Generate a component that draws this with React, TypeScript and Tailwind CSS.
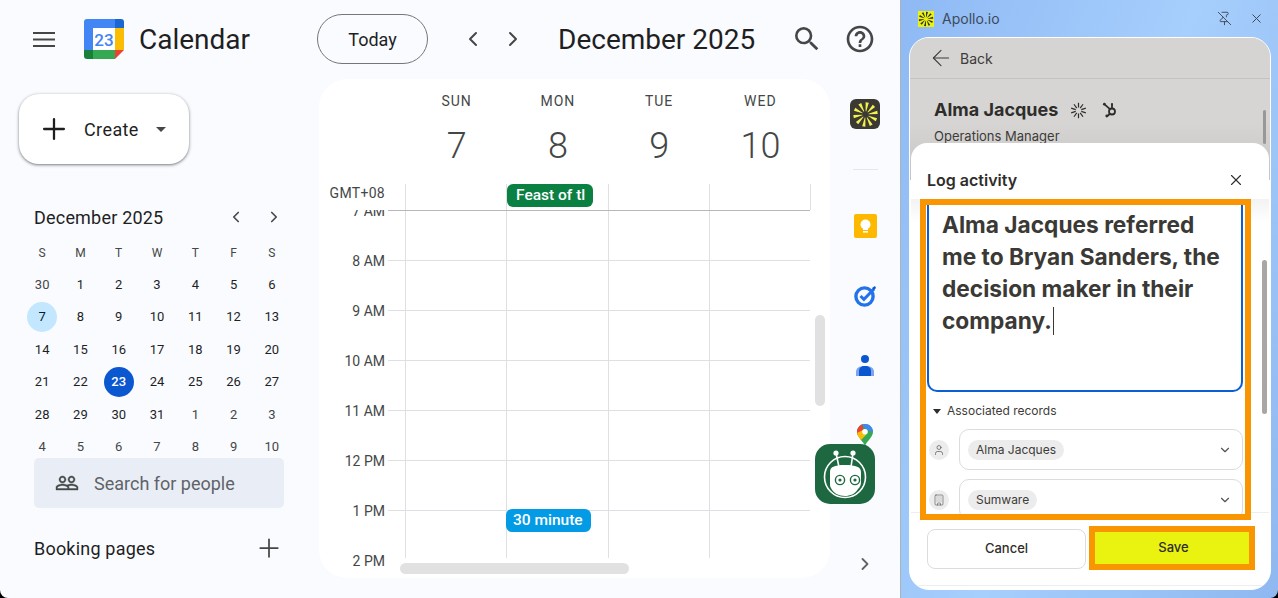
import {
  ArrowLeft,
  Building,
  ChevronDown,
  ChevronLeft,
  ChevronRight,
  PinOff,
  Plus,
  User,
  X,
} from "lucide-react";

const miniDays = [
  [30, 1, 2, 3, 4, 5, 6],
  [7, 8, 9, 10, 11, 12, 13],
  [14, 15, 16, 17, 18, 19, 20],
  [21, 22, 23, 24, 25, 26, 27],
  [28, 29, 30, 31, 1, 2, 3],
  [4, 5, 6, 7, 8, 9, 10],
];

const weekHead = ["S", "M", "T", "W", "T", "F", "S"];
const columns = [
  { day: "SUN", date: 7 },
  { day: "MON", date: 8 },
  { day: "TUE", date: 9 },
  { day: "WED", date: 10 },
];
const hours = ["7 AM", "8 AM", "9 AM", "10 AM", "11 AM", "12 PM", "1 PM"];

const Burst = ({ size, color }: { size: number; color: string }) => (
  <svg width={size} height={size} viewBox="0 0 30 30">
    {[0, 36, 72, 108, 144, 180, 216, 252, 288, 324].map((deg) => (
      <polygon
        key={deg}
        points="14.7,11.5 15.3,11.5 16.8,1.5 13.2,1.5"
        fill={color}
        transform={`rotate(${deg + 8} 15 15)`}
      />
    ))}
  </svg>
);

const Spark = () => (
  <svg width="17" height="17" viewBox="0 0 17 17" stroke="#2f2d2b" strokeWidth="1.2">
    {[0, 36, 72, 108, 144, 180, 216, 252, 288, 324].map((deg) => (
      <line key={deg} x1="8.5" y1="5.6" x2="8.5" y2="0.8" transform={`rotate(${deg} 8.5 8.5)`} />
    ))}
  </svg>
);

const HamburgerIcon = () => (
  <svg width="22" height="15" viewBox="0 0 22 15" stroke="#444746" strokeWidth="2">
    <line x1="0" y1="1" x2="22" y2="1" />
    <line x1="0" y1="7.5" x2="22" y2="7.5" />
    <line x1="0" y1="14" x2="22" y2="14" />
  </svg>
);

const SearchIcon = () => (
  <svg width="32" height="32" viewBox="0 0 24 24" fill="#444746">
    <path d="M15.5 14h-.79l-.28-.27A6.471 6.471 0 0 0 16 9.5 6.5 6.5 0 1 0 9.5 16c1.61 0 3.09-.59 4.23-1.57l.27.28v.79l5 4.99L20.49 19l-4.99-5zm-6 0C7.01 14 5 11.99 5 9.5S7.01 5 9.5 5 14 7.01 14 9.5 11.99 14 9.5 14z" />
  </svg>
);

const HelpIcon = () => (
  <svg width="32" height="32" viewBox="0 0 24 24" fill="#444746">
    <path d="M11 18h2v-2h-2v2zm1-16C6.48 2 2 6.48 2 12s4.48 10 10 10 10-4.48 10-10S17.52 2 12 2zm0 18c-4.41 0-8-3.59-8-8s3.59-8 8-8 8 3.59 8 8-3.59 8-8 8zm0-14c-2.21 0-4 1.79-4 4h2c0-1.1.9-2 2-2s2 .9 2 2c0 2-3 1.75-3 5h2c0-2.25 3-2.5 3-5 0-2.21-1.79-4-4-4z" />
  </svg>
);

const CalendarLogo = () => (
  <svg width="40" height="40" viewBox="0 0 40 40">
    <path d="M3 0h28v9H9v22H0V3a3 3 0 0 1 3-3z" fill="#4285f4" />
    <path d="M31 0h6a3 3 0 0 1 3 3v6h-9z" fill="#1967d2" />
    <rect x="31" y="9" width="9" height="22" fill="#fbbc04" />
    <path d="M9 31h22v9H9z" fill="#34a853" />
    <path d="M0 31h9v9H3a3 3 0 0 1-3-3z" fill="#188038" />
    <path d="M31 31h9l-9 9z" fill="#ea4335" />
    <rect x="9" y="9" width="22" height="22" fill="#fff" />
    <text
      x="20"
      y="26.5"
      textAnchor="middle"
      fontSize="17"
      fontWeight="500"
      fontFamily="Roboto, sans-serif"
      fill="#4285f4"
    >
      23
    </text>
  </svg>
);

const BotBadge = () => (
  <svg width="60" height="60" viewBox="0 0 60 60">
    <rect width="60" height="60" rx="15" fill="#1e6841" />
    <circle cx="30" cy="33" r="20.5" fill="none" stroke="#fff" strokeWidth="1.6" />
    <path d="M21 9l3 14M38 9l-2 14" stroke="#fff" strokeWidth="1.6" />
    <circle cx="21" cy="9" r="2.6" fill="#fff" />
    <circle cx="38" cy="9" r="2.6" fill="#fff" />
    <path
      d="M15 28c0-5 4-7 15-7s16 2 16 7v10c0 3-1 5-3 7-3 5-8 7-13 7-6 0-12-3-14-8-1-1-1-3-1-5z"
      fill="#fff"
    />
    <circle cx="25" cy="36" r="4.6" fill="#fff" stroke="#1e6841" strokeWidth="1.4" />
    <circle cx="40" cy="36" r="4.6" fill="#fff" stroke="#1e6841" strokeWidth="1.4" />
    <circle cx="25" cy="36" r="1.6" fill="#1e6841" />
    <circle cx="40" cy="36" r="1.6" fill="#1e6841" />
  </svg>
);

const KeepIcon = () => (
  <svg width="23" height="24" viewBox="0 0 23 24">
    <rect width="23" height="24" rx="2" fill="#fdb900" />
    <circle cx="11.5" cy="10.5" r="5" fill="#fff" />
    <rect x="9" y="13" width="5" height="3" fill="#fff" />
    <rect x="9" y="17" width="5" height="1.6" fill="#fff" />
  </svg>
);

const TasksIcon = () => (
  <svg width="23" height="22" viewBox="0 0 23 22">
    <circle cx="10.5" cy="11.5" r="8.6" fill="none" stroke="#2273ea" strokeWidth="3.4" />
    <path d="M6.5 11l3.4 3.4L20 4" fill="none" stroke="#2273ea" strokeWidth="3" />
    <path d="M18 3l3-2 1 2-2 2z" fill="#0b57d0" />
  </svg>
);

const ContactIcon = () => (
  <svg width="18" height="21" viewBox="0 0 18 21">
    <circle cx="9" cy="4" r="4" fill="#0b57d0" />
    <path d="M0 21v-4c0-4 3-6 9-6s9 2 9 6v4z" fill="#7ba5f0" />
    <path d="M3 21v-5c0-3 2-5 6-5s6 2 6 5v5z" fill="#0b57d0" />
  </svg>
);

const MapsIcon = () => (
  <svg width="16" height="22" viewBox="0 0 16 22">
    <clipPath id="pin">
      <path d="M8 0C3.6 0 0 3.5 0 7.8c0 5.6 6 9 8 14.2 2-5.2 8-8.6 8-14.2C16 3.5 12.4 0 8 0z" />
    </clipPath>
    <g clipPath="url(#pin)">
      <rect width="16" height="22" fill="#34a853" />
      <path d="M0 0h6v6L0 12z" fill="#ea4335" />
      <path d="M4 0h12v8l-6-2z" fill="#4285f4" />
      <path d="M0 9l6-3 3 5-6 6-3-3z" fill="#fbbc04" />
    </g>
    <circle cx="8" cy="7.8" r="2.8" fill="#fff" />
  </svg>
);

const PeopleIcon = () => (
  <svg width="24" height="24" viewBox="0 0 24 24" fill="#444746" stroke="#444746" strokeWidth="0.4">
    <path d="M16.5 13c-1.2 0-3.07.34-4.5 1-1.43-.67-3.3-1-4.5-1C5.33 13 1 14.08 1 16.25V19h22v-2.75c0-2.17-4.33-3.25-6.5-3.25zm-4 4.5h-10v-1.25c0-.54 2.56-1.75 5-1.75s5 1.21 5 1.75v1.25zm9 0H14v-1.25c0-.46-.2-.86-.52-1.22.88-.3 1.96-.53 3.02-.53 2.44 0 5 1.21 5 1.75v1.25zM7.5 12c1.93 0 3.5-1.57 3.5-3.5S9.43 5 7.5 5 4 6.57 4 8.5 5.57 12 7.5 12zm0-5.5c1.1 0 2 .9 2 2s-.9 2-2 2-2-.9-2-2 .9-2 2-2zm9 5.5c1.93 0 3.5-1.57 3.5-3.5S18.43 5 16.5 5 13 6.57 13 8.5s1.57 3.5 3.5 3.5zm0-5.5c1.1 0 2 .9 2 2s-.9 2-2 2-2-.9-2-2 .9-2 2-2z" />
  </svg>
);

const HubspotIcon = () => (
  <svg width="16" height="16" viewBox="0 0 16 16" fill="none" stroke="#2f2d2b" strokeWidth="1.8">
    <circle cx="10" cy="9.5" r="3" />
    <path d="M8 7.2L2.8 2.6M8 11.8l-2.6 2.2M10 6.5V2.6" />
    <circle cx="2.4" cy="2.2" r="1.4" fill="#2f2d2b" stroke="none" />
    <circle cx="4.8" cy="14" r="1.4" fill="#2f2d2b" stroke="none" />
    <circle cx="10" cy="2.2" r="1.1" fill="#2f2d2b" stroke="none" />
  </svg>
);

const MiniCalendar = () => (
  <div className="mt-[8px] ml-[23px] grid h-[221px] w-[268px] grid-cols-7 grid-rows-[31px_repeat(6,32.5px)] text-[13px]">
    {weekHead.map((d, i) => (
      <div key={i} className="flex items-center justify-center text-[12px] text-[#444746]">
        {d}
      </div>
    ))}
    {miniDays.flat().map((d, i) => {
      const muted = i === 0 || i > 31;
      return (
        <div key={i} className="flex items-center justify-center">
          <span
            className={`flex h-[30px] w-[30px] items-center justify-center rounded-full ${
              i === 23
                ? "bg-[#0b57d0] font-medium text-white"
                : i === 7
                  ? "bg-[#c2e7ff] text-[#001d35]"
                  : muted
                    ? "text-[#444746]"
                    : "text-[#1f1f1f]"
            }`}
          >
            {d}
          </span>
        </div>
      );
    })}
  </div>
);

const Sidebar = () => (
  <aside className="w-[319px] shrink-0">
    <button className="mt-[15px] ml-[19px] flex h-[70px] w-[170px] items-center rounded-[20px] bg-white pl-[18px] text-[18px] tracking-[0.4px] text-[#1f1f1f] shadow-[0_1px_3px_1px_rgba(60,64,67,0.25),0_1px_2px_rgba(60,64,67,0.4)]">
      <Plus size={34} strokeWidth={1.6} className="mr-[13px] text-[#1f1f1f]" />
      <span className="mt-[1px]">Create</span>
      <span className="ml-[17px] h-0 w-0 border-x-[5px] border-t-[5px] border-x-transparent border-t-[#444746]" />
    </button>
    <div className="mt-[41px] flex h-[24px] items-center pl-[34px] pr-[36px] text-[18px] tracking-[0.2px] text-[#1f1f1f]">
      <span className="flex-1">December 2025</span>
      <ChevronLeft size={18} strokeWidth={2.2} className="mr-[20px] text-[#444746]" />
      <ChevronRight size={18} strokeWidth={2.2} className="text-[#444746]" />
    </div>
    <MiniCalendar />
    <div className="relative ml-[34px] flex h-[50px] w-[250px] items-center rounded-[5px] bg-[#e9eef6] pl-[21px] text-[18px] text-[#5f6368]">
      <PeopleIcon />
      <span className="ml-[15px]">Search for people</span>
    </div>
    <div className="mt-[28px] flex h-[24px] items-center pl-[34px] pr-[35px] text-[18px] tracking-[0.2px] text-[#1f1f1f]">
      <span className="flex-1">Booking pages</span>
      <Plus size={30} strokeWidth={1.4} className="text-[#444746]" />
    </div>
  </aside>
);

const TimeGrid = () => (
  <div className="h-[368px] overflow-hidden">
    {hours.map((h, i) => (
      <div key={h} className={`flex ${i === 6 ? "h-[48px]" : "h-[50px]"}`}>
        <div className="-mt-[9px] h-[20px] w-[66px] shrink-0 text-right text-[14px] leading-[20px] text-[#444746]">
          {h}
        </div>
        <div
          className={`ml-[3px] flex h-full w-[422px] border-t pl-[17px] ${
            i === 0 ? "border-[#b4b7bb]" : "border-[#dde1e6]"
          }`}
        >
          {columns.map((c) => (
            <div key={c.day} className="h-full w-[101.25px] border-l border-[#dde1e6]" />
          ))}
        </div>
      </div>
    ))}
    <div className="-mt-[7px] h-[20px] w-[66px] text-right text-[14px] leading-[20px] text-[#444746]">2 PM</div>
  </div>
);

const CalendarCard = () => (
  <section className="relative h-[499px] w-[511px] shrink-0 overflow-hidden rounded-[28px] bg-white">
    <div className="flex h-[105px] pl-[87px]">
      {columns.map((c) => (
        <div key={c.day} className="w-[101.25px] text-center text-[#444746]">
          <div className="mt-[13px] text-[14px] leading-[18px] tracking-[1px]">{c.day}</div>
          <div className="mt-[14px] text-[36px] font-light leading-[44px]">{c.date}</div>
        </div>
      ))}
    </div>
    <div className="flex h-[26px]">
      <div className="w-[66px] shrink-0 text-right text-[14px] leading-[18px] tracking-[0.3px] text-[#444746]">
        GMT+08
      </div>
      <div className="ml-[20px] flex">
        {columns.map((c) => (
          <div key={c.day} className="h-full w-[101.25px] border-l border-[#dde1e6]" />
        ))}
        <div className="h-full border-l border-[#dde1e6]" />
      </div>
    </div>
    <TimeGrid />
    <div className="absolute left-[188px] top-[105px] flex h-[23px] w-[86px] items-center overflow-hidden whitespace-nowrap rounded-[6px] bg-[#0b8043] pl-[9px] pt-[1px] text-[15.5px] font-medium text-white">
      Feast of tl
    </div>
    <div className="absolute left-[187px] top-[430px] flex h-[23px] w-[85px] items-center overflow-hidden whitespace-nowrap rounded-[6px] bg-[#039be5] pl-[7px] pt-[1px] text-[15.5px] font-medium text-white">
      30 minute
    </div>
    <div className="absolute left-[496px] top-[236px] h-[91px] w-[10px] rounded-full bg-[#e1e1e1]" />
    <div className="absolute left-[81px] top-[484px] h-[11px] w-[229px] rounded-full bg-[#e1e1e1]" />
  </section>
);

const Rail = () => (
  <aside className="flex w-[70px] flex-col items-center">
    <div className="mt-[20px] flex h-[30px] w-[30px] items-center justify-center rounded-[6px] bg-[#3a3934]">
      <Burst size={27} color="#f4f14f" />
    </div>
    <div className="mt-[40px] h-px w-[25px] bg-[#e3e6ea]" />
    <div className="mt-[44px]">
      <KeepIcon />
    </div>
    <div className="mt-[47px]">
      <TasksIcon />
    </div>
    <div className="mt-[48px]">
      <ContactIcon />
    </div>
    <div className="mt-[48px]">
      <MapsIcon />
    </div>
    <ChevronRight size={20} strokeWidth={2.2} className="mt-[108px] text-[#5f6368]" />
  </aside>
);

const RecordRow = ({ name, icon }: { name: string; icon: React.ReactNode }) => (
  <div className="flex items-center pl-[3px]">
    <span className="flex h-[20px] w-[20px] shrink-0 items-center justify-center rounded-full bg-[#ececec] text-[#55524f]">
      {icon}
    </span>
    <div className="ml-[10px] flex h-[41px] w-[284px] shrink-0 items-center rounded-[10px] border border-[#dcdcdc] pl-[8px] pr-[10px]">
      <span className="flex h-[20px] items-center rounded-full bg-[#ececec] px-[8px] text-[12px] text-[#3d3b38]">
        {name}
      </span>
      <ChevronDown size={14} className="ml-auto text-[#55524f]" />
    </div>
  </div>
);

const LogActivity = () => (
  <div className="absolute left-[1px] top-[105px] flex h-[446px] w-[358px] flex-col rounded-t-[16px] bg-[linear-gradient(#ffffff_442px,#eeeeee_442px,#eeeeee_443px,#ffffff_443px)]">
    <div className="flex h-[56px] shrink-0 items-end justify-between pb-[9px] pl-[16px] pr-[24px]">
      <span className="text-[16px] font-semibold leading-[20px] text-[#2f2d2b]">Log activity</span>
      <X size={18} strokeWidth={1.5} className="mb-[1px] text-[#2f2d2b]" />
    </div>
    <div className="bg-[linear-gradient(transparent_313px,#eeeeee_313px,#eeeeee_314px,transparent_314px),linear-gradient(#f3f3f3,#ffffff_24px)]">
      <div className="ml-[9px] h-[321px] w-[331px] overflow-hidden border-[6px] border-[#f99500] bg-white">
        <div className="ml-px h-[187px] w-[316px] rounded-b-[10px] border-x-2 border-b-2 border-[#0b5fd3] pl-[13px] pr-[14px] pt-[4px] text-[22.7px] font-bold leading-[32px] text-[#3b3936]">
          Alma Jacques referred me to Bryan Sanders, the decision maker in their company.
          <span className="ml-px inline-block h-[28px] w-px bg-[#3b3936] align-[-6px]" />
        </div>
        <div className="mt-[10px] flex h-[18px] items-center pl-[7px] text-[12px] text-[#3d3b38]">
          <span className="mr-[6px] h-0 w-0 border-x-[4.5px] border-t-[5px] border-x-transparent border-t-[#2f2d2b]" />
          Associated records
        </div>
        <div className="mt-[9px] flex flex-col gap-[9px]">
          <RecordRow name="Alma Jacques" icon={<User size={12} strokeWidth={1.4} />} />
          <RecordRow name="Sumware" icon={<Building size={12} strokeWidth={1.2} />} />
        </div>
      </div>
    </div>
    <div className="mt-[6px] flex items-start pl-[16px]">
      <button className="mt-[3px] h-[40px] w-[159px] rounded-[8px] border border-[#dcdcdc] text-[13px] font-medium text-[#2f2d2b]">
        Cancel
      </button>
      <button className="ml-[3px] h-[44px] w-[166px] border-[6px] border-[#f99500] bg-[#eaf30f] pl-[3px] text-[13px] font-medium text-[#2f2d2b]">
        Save
      </button>
    </div>
    <div className="absolute left-[351px] top-[117px] h-[154px] w-[5px] rounded-full bg-[#a9a7a5]" />
  </div>
);

const ApolloPanel = () => (
  <div className="flex h-full w-[378px] shrink-0 flex-col border-l border-[#a8b4b8] bg-[linear-gradient(110deg,#8fb9f4,#a6cffd_50%,#8fb8f1)] font-[Inter,sans-serif]">
    <div className="flex h-[37px] shrink-0 items-center pl-[17px] pr-[14px]">
      <span className="flex h-[16px] w-[16px] items-center justify-center bg-[#eaf30f]">
        <Burst size={16} color="#2f2d2b" />
      </span>
      <span className="ml-[8px] text-[14px] text-[#3d4a5c]">Apollo.io</span>
      <PinOff size={15} strokeWidth={1.5} className="ml-auto mr-[17px] text-[#3d4a5c]" />
      <X size={15} strokeWidth={1.6} className="text-[#3d4a5c]" />
    </div>
    <div className="relative ml-[8px] h-[553px] w-[362px] overflow-hidden rounded-[20px] border border-white bg-white">
      <div className="h-[142px] bg-[linear-gradient(#d6d5d3_60%,#c6c4c3)]">
        <div className="flex h-[41px] items-center border-b border-[#c4c3c1] bg-[#d5d4d2] pl-[18px] text-[14px] text-[#3d3b38]">
          <ArrowLeft size={26} strokeWidth={1} className="mr-[6px]" />
          Back
        </div>
        <div className="flex items-center pl-[24px] pt-[19px]">
          <span className="text-[18px] font-bold leading-[24px] text-[#2f2d2b]">Alma Jacques</span>
          <span className="ml-[12px] flex">
            <Spark />
          </span>
          <span className="ml-[15px] flex">
            <HubspotIcon />
          </span>
        </div>
        <div className="mt-[5px] pl-[24px] text-[13px] leading-[18px] text-[#3d3b38]">Operations Manager</div>
      </div>
      <div className="absolute left-[353px] top-[72px] h-[34px] w-[3px] rounded-full bg-[#9a9896]" />
      <LogActivity />
    </div>
  </div>
);

export default function App() {
  return (
    <div className="h-[598px] w-[1278px] overflow-hidden bg-black">
      <div className="relative flex h-full overflow-hidden rounded-b-[8px] font-[Roboto,sans-serif]">
        <div className="flex h-full w-[900px] shrink-0 flex-col bg-[#f9fbff]">
          <header className="flex h-[79px] shrink-0 items-center pb-[1px] text-[#1f1f1f]">
            <div className="flex w-[317px] shrink-0 items-center pl-[33px]">
              <HamburgerIcon />
              <span className="ml-[29px] flex">
                <CalendarLogo />
              </span>
              <span className="ml-[15px] mt-[2px] text-[28px] leading-[36px]">Calendar</span>
            </div>
            <button className="h-[50px] w-[111px] rounded-full border border-[#747775] text-[18px]">Today</button>
            <ChevronLeft size={24} strokeWidth={2} className="ml-[33px] text-[#444746]" />
            <ChevronRight size={24} strokeWidth={2} className="ml-[16px] text-[#444746]" />
            <span className="ml-[33px] mt-[2px] text-[28px] leading-[36px]">December 2025</span>
            <span className="ml-[36px] flex">
              <SearchIcon />
            </span>
            <span className="ml-[21px] flex">
              <HelpIcon />
            </span>
          </header>
          <div className="flex">
            <Sidebar />
            <CalendarCard />
            <Rail />
          </div>
        </div>
        <div className="absolute left-[815px] top-[444px]">
          <BotBadge />
        </div>
        <ApolloPanel />
      </div>
    </div>
  );
}
